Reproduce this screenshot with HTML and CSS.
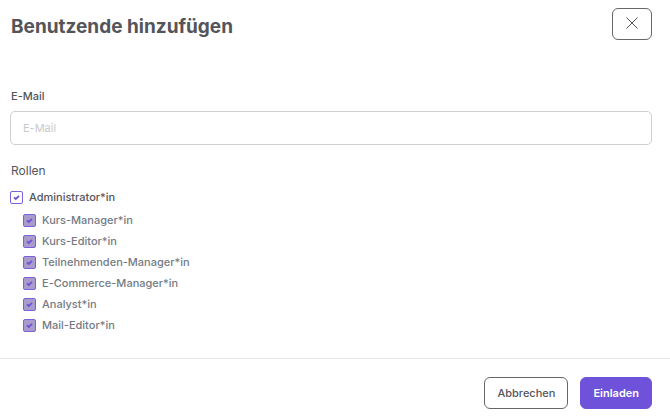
FILE: index.html
```html
<!DOCTYPE html>
<html lang="de">
<head>
    <meta charset="UTF-8">
    <title>Benutzende hinzufügen</title>
    <link rel="stylesheet" href="styles.css">
</head>
<body>
<form class="modal">
    <div class="modal_header">
        <h1 class="modal_title">Benutzende hinzufügen</h1>
        <button type="button" class="btn btn_close" aria-label="Schließen">
            <svg width="12" height="12" viewBox="0 0 12 12" fill="none" stroke="currentColor"><path d="M0.5 0.5L11.5 11.5M11.5 0.5L0.5 11.5"/></svg>
        </button>
    </div>

    <div class="modal_body">
        <label class="field_label" for="email">E-Mail</label>
        <input class="field_input" type="email" id="email" placeholder="E-Mail">

        <fieldset class="roles">
            <legend class="roles_title">Rollen</legend>
            <label class="role"><input type="checkbox" class="role_check" checked>Administrator*in</label>
            <div class="roles_sub">
                <label class="role"><input type="checkbox" class="role_check" checked disabled>Kurs-Manager*in</label>
                <label class="role"><input type="checkbox" class="role_check" checked disabled>Kurs-Editor*in</label>
                <label class="role"><input type="checkbox" class="role_check" checked disabled>Teilnehmenden-Manager*in</label>
                <label class="role"><input type="checkbox" class="role_check" checked disabled>E-Commerce-Manager*in</label>
                <label class="role"><input type="checkbox" class="role_check" checked disabled>Analyst*in</label>
                <label class="role"><input type="checkbox" class="role_check" checked disabled>Mail-Editor*in</label>
            </div>
        </fieldset>
    </div>

    <div class="modal_footer">
        <button type="button" class="btn">Abbrechen</button>
        <button type="submit" class="btn btn_primary">Einladen</button>
    </div>
</form>
</body>
</html>
```

FILE: styles.css
```css
* {
    box-sizing: border-box;
}

body {
    margin: 0;
    background: #fff;
    color: #54555a;
    font-family: Inter, "Liberation Sans", sans-serif;
    font-size: 11px;
    font-weight: 500;
    line-height: 21px;
}

.modal_header {
    display: flex;
    justify-content: space-between;
    align-items: flex-start;
    padding: 8px 18px 0 11px;
}

.modal_title {
    margin: 4px 0 0;
    font-size: 19px;
    font-weight: 700;
    line-height: 30px;
}

.modal_body {
    padding: 44px 18px 22px 10px;
}

.field_label {
    display: block;
    margin-bottom: 4px;
    padding-left: 1px;
}

.field_input {
    display: block;
    width: 100%;
    height: 34px;
    padding: 0 12px;
    border: 1px solid #cfcfd2;
    border-radius: 5px;
    background: #fff;
    color: inherit;
    font: inherit;
}

.field_input::placeholder {
    color: #c9c9cd;
    font-weight: 400;
    opacity: 1;
}

.roles {
    margin: 15px 0 0;
    padding: 0;
    border: 0;
}

.roles_title {
    margin-bottom: 6px;
    padding: 0 1px;
    font-size: 12px;
    font-weight: 400;
}

.roles_sub {
    margin-top: 2px;
    padding-left: 13px;
    color: #747b85;
}

.role {
    display: flex;
    align-items: center;
    gap: 6px;
}

.role_check {
    width: 13px;
    height: 13px;
    margin: 0;
    border: 1px solid #7a60dd;
    border-radius: 2px;
    appearance: none;
    background: #fff;
}

.role_check:checked {
    background-image: url("data:image/svg+xml,%3Csvg xmlns='http://www.w3.org/2000/svg' viewBox='0 0 11 11'%3E%3Cpath d='M3 5.3L4.8 7L8 3.8' fill='none' stroke='%236e52d9' stroke-width='1.8'/%3E%3C/svg%3E");
}

.role_check:disabled {
    background-color: #a99bcb;
}

.modal_footer {
    display: flex;
    justify-content: flex-end;
    gap: 12px;
    padding: 18px 18px 7px;
    border-top: 1px solid #e6e6e8;
}

.btn {
    height: 32px;
    padding: 0 12px;
    border: 1px solid #66676b;
    border-radius: 6px;
    background: #fff;
    color: #54555a;
    font: inherit;
}

.btn_close {
    display: flex;
    align-items: center;
    padding: 0 13px 2px;
}

.btn_primary {
    border-color: #6e52d9;
    background: #6e52d9;
    color: #fff;
    font-weight: 600;
}
```
